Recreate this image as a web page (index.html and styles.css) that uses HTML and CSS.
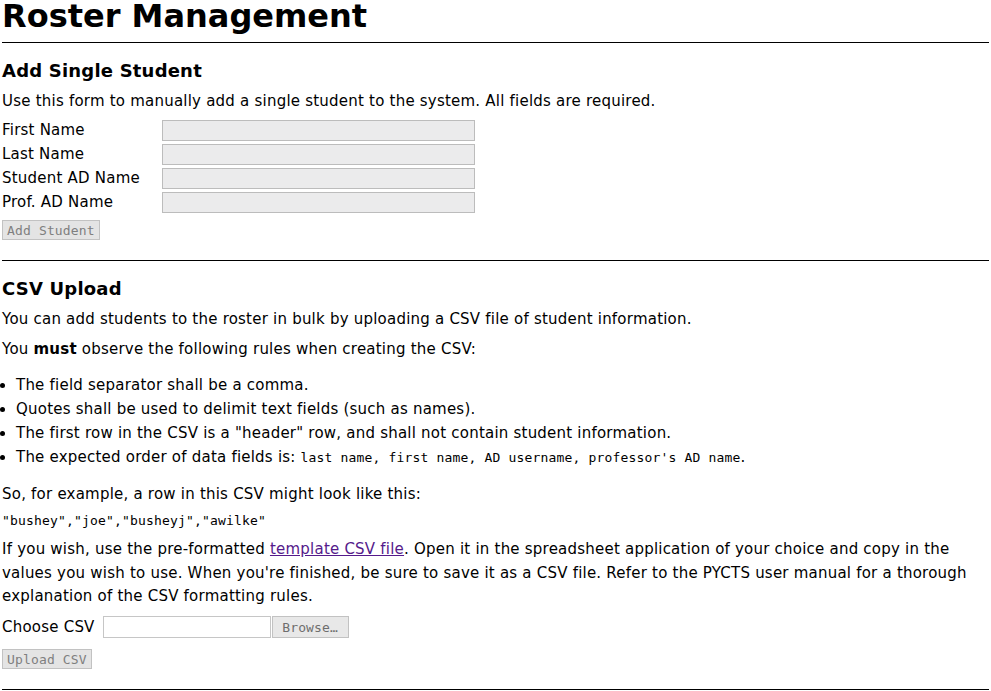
FILE: index.html
```html
<!DOCTYPE html>
<html>
<head>
<meta charset="utf-8">
<title>Roster Management</title>
<link rel="stylesheet" href="styles.css">
</head>
<body>
<h1 class="title">Roster Management</h1>
<hr class="rule">
<section class="section">
  <h2 class="heading">Add Single Student</h2>
  <p class="text">Use this form to manually add a single student to the system. All fields are required.</p>
  <form class="student-form">
    <div class="field"><label class="label">First Name</label><input class="input" type="text" disabled></div>
    <div class="field"><label class="label">Last Name</label><input class="input" type="text" disabled></div>
    <div class="field"><label class="label">Student AD Name</label><input class="input" type="text" disabled></div>
    <div class="field"><label class="label">Prof. AD Name</label><input class="input" type="text" disabled></div>
    <div class="actions"><button class="btn" type="button" disabled>Add Student</button></div>
  </form>
</section>
<hr class="rule">
<section class="section">
  <h2 class="heading">CSV Upload</h2>
  <p class="text">You can add students to the roster in bulk by uploading a CSV file of student information.</p>
  <p class="text">You <strong>must</strong> observe the following rules when creating the CSV:</p>
  <ul class="rules">
    <li>The field separator shall be a comma.</li>
    <li>Quotes shall be used to delimit text fields (such as names).</li>
    <li>The first row in the CSV is a "header" row, and shall not contain student information.</li>
    <li>The expected order of data fields is: <code class="mono">last name, first name, AD username, professor's AD name</code>.</li>
  </ul>
  <p class="text">So, for example, a row in this CSV might look like this:</p>
  <p class="code"><code class="mono">"bushey","joe","busheyj","awilke"</code></p>
  <p class="text long">If you wish, use the pre-formatted <a class="link" href="#">template CSV file</a>. Open it in the spreadsheet application of your choice and copy in the values you wish to use. When you're finished, be sure to save it as a CSV file. Refer to the PYCTS user manual for a thorough explanation of the CSV formatting rules.</p>
  <div class="file-row">
    <label class="label-inline">Choose CSV</label>
    <span class="file-box"></span><button class="btn browse" type="button">Browse…</button>
  </div>
  <div class="actions upload"><button class="btn" type="button" disabled>Upload CSV</button></div>
</section>
<hr class="rule">
</body>
</html>
```
FILE: styles.css
```css
html, body {
  margin: 0;
  padding: 0;
  background: #fff;
}
body {
  padding: 0 2px;
  font-family: "DejaVu Sans", sans-serif;
  font-size: 15px;
  letter-spacing: 0.22px;
  color: #000;
}
.title {
  margin: 0;
  font-size: 32px;
  line-height: 32px;
  letter-spacing: 0;
  font-weight: bold;
  height: 34px;
}
.rule {
  margin: 8px 0 0 0;
  border: 0;
  border-top: 1px solid #000;
  height: 0;
}
.section {
  padding-top: 12px;
  padding-bottom: 12px;
}
.heading {
  margin: 0 0 4px 0;
  padding-top: 1px;
  height: 29px;
  font-size: 18px;
  line-height: 30px;
  letter-spacing: 0.2px;
  font-weight: bold;
}
.text {
  margin: 0 0 6px 0;
  line-height: 24px;
}
.long {
  line-height: 23.5px;
  margin-bottom: 7.5px;
}
.student-form {
  display: flex;
  flex-direction: column;
  gap: 3px;
  margin-top: 7px;
}
.field {
  display: flex;
  align-items: center;
  height: 21px;
}
.label {
  width: 160px;
  line-height: 21px;
}
.input {
  box-sizing: border-box;
  width: 313px;
  height: 21px;
  margin: 0;
  border: 1px solid #bcbcbc;
  background: #ebebec;
  padding: 0;
}
.actions {
  display: flex;
  padding-top: 4px;
}
.upload {
  padding-top: 11px;
}
.btn {
  box-sizing: border-box;
  font-family: "DejaVu Sans Mono", monospace;
  font-size: 13px;
  letter-spacing: 0.15px;
  height: 20px;
  padding: 0 4px;
  margin: 0;
  border: 1px solid #c2c2c2;
  background: #e4e4e4;
  color: #7f7f7f;
}
.rules {
  margin: 12px 0 12px 0;
  padding: 0 0 0 14px;
}
.rules li {
  line-height: 24px;
}
.mono {
  font-family: "DejaVu Sans Mono", monospace;
  font-size: 13px;
  letter-spacing: 0.17px;
}
.code {
  margin: 0 0 9px 0;
  line-height: 17px;
}
.link {
  color: #551a8b;
}
.file-row {
  display: flex;
  align-items: center;
  height: 22px;
}
.label-inline {
  margin-right: 8px;
}
.file-box {
  box-sizing: border-box;
  width: 168px;
  height: 22px;
  border: 1px solid #c6c6c6;
  background: #fff;
}
.browse {
  height: 22px;
  width: 77px;
  margin-left: 1px;
  color: #6e6e6e;
  background: #e8e8e8;
}
```
